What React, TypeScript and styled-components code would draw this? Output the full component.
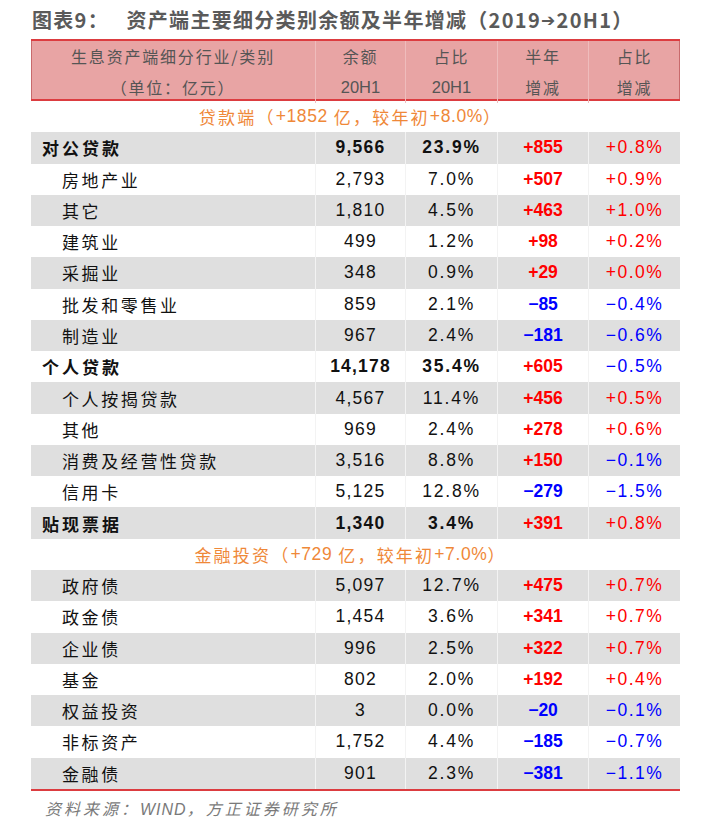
import React from "react";
import styled, { createGlobalStyle } from "styled-components";

const Global = createGlobalStyle`
  html, body { margin: 0; padding: 0; background: #ffffff; }
  body { font-family: "Noto Sans CJK SC", "Liberation Sans", sans-serif; }
`;

const COLS = "284px 90px 92px 91px 92px";
const ROW_H = 31.27;

const Page = styled.div`
  width: 709px;
  height: 832px;
  overflow: hidden;
  background: #fff;
`;

const Title = styled.h1`
  margin: 0;
  height: 39px;
  padding-left: 32px;
  display: flex;
  align-items: center;
  font-family: "Noto Sans CJK SC", sans-serif;
  font-size: 20px;
  font-weight: 700;
  color: #5a5a5a;
  letter-spacing: 1.3px;
  white-space: pre;
`;

const Arrow = styled.span`
  font-family: "DejaVu Sans", sans-serif;
  font-size: 17px;
`;

const Table = styled.div`
  margin-left: 31px;
  width: 649px;
  display: flex;
  flex-direction: column;
`;

const Header = styled.div`
  display: grid;
  grid-template-columns: ${COLS};
  background: #e8a4a4;
  border-top: 2px solid #dc3c40;
  border-bottom: 2px solid #dc3c40;
  box-shadow: inset 1px 0 0 #c86a6c, inset -1px 0 0 #c86a6c;
  height: 58px;
  box-sizing: content-box;
`;

const HeadCell = styled.div<{ $first?: boolean }>`
  display: flex;
  flex-direction: column;
  align-items: center;
  justify-content: center;
  border-left: ${(p) => (p.$first ? "none" : "1px solid #efbcbc")};
  color: #555;
  font-family: "Noto Sans CJK SC", sans-serif;
  font-size: 16px;
  letter-spacing: 1.8px;
  line-height: 31px;
`;

const HeadNum = styled.span`
  font-family: "Liberation Sans", sans-serif;
  font-size: 16.5px;
  letter-spacing: 0;
`;

const Section = styled.div`
  height: ${ROW_H}px;
  display: flex;
  align-items: center;
  justify-content: center;
  color: #ef8838;
  font-family: "Noto Sans CJK SC", sans-serif;
  font-size: 17px;
  letter-spacing: 2.2px;
  padding-right: 10px;
  white-space: pre;
`;

const SecNum = styled.span`
  font-family: "Liberation Sans", sans-serif;
  font-size: 17.5px;
  letter-spacing: 0.6px;
`;

const Row = styled.div<{ $shade: boolean }>`
  display: grid;
  grid-template-columns: ${COLS};
  height: ${ROW_H}px;
  background: ${(p) => (p.$shade ? "#dfdfdf" : "#ffffff")};
`;

const Label = styled.div<{ $bold: boolean; $indent: boolean }>`
  display: flex;
  align-items: center;
  padding-left: ${(p) => (p.$indent ? "31px" : "11px")};
  font-family: "Noto Sans CJK SC", sans-serif;
  font-size: 17px;
  font-weight: ${(p) => (p.$bold ? 700 : 400)};
  letter-spacing: ${(p) => (p.$bold ? "3px" : "2.6px")};
  color: #111;
`;

const Cell = styled.div<{
  $bold?: boolean;
  $color?: string;
  $spacing?: number;
}>`
  display: flex;
  align-items: center;
  justify-content: center;
  border-left: 1px solid #f3f3f3;
  font-family: "Liberation Sans", sans-serif;
  font-size: 17.5px;
  font-weight: ${(p) => (p.$bold ? 700 : 400)};
  color: ${(p) => p.$color || "#111"};
  letter-spacing: ${(p) => p.$spacing ?? 0.5}px;
`;

const BottomRule = styled.div`
  height: 2px;
  background: #dc3c40;
`;

const Source = styled.div`
  margin-top: 6px;
  padding-left: 45px;
  font-family: "Noto Sans CJK SC", sans-serif;
  font-style: italic;
  font-size: 16px;
  letter-spacing: 3px;
  color: #7a7a7a;
  line-height: 22px;
`;

const SourceLatin = styled.span`
  font-family: "Liberation Sans", sans-serif;
  letter-spacing: 1px;
`;

const Note = styled.div`
  margin-top: 7px;
  padding-left: 50px;
  font-family: "Noto Sans CJK SC", sans-serif;
  font-size: 16px;
  letter-spacing: 3px;
  color: #2f6fc0;
  line-height: 22px;
`;

type R = {
  label: string;
  amt: string;
  share: string;
  chg: string;
  pct: string;
  bold?: boolean;
};

const RED = "#ff0000";
const BLUE = "#0000ff";
const M = "\u2212";

const loans: R[] = [
  { label: "对公贷款", amt: "9,566", share: "23.9%", chg: "+855", pct: "+0.8%", bold: true },
  { label: "房地产业", amt: "2,793", share: "7.0%", chg: "+507", pct: "+0.9%" },
  { label: "其它", amt: "1,810", share: "4.5%", chg: "+463", pct: "+1.0%" },
  { label: "建筑业", amt: "499", share: "1.2%", chg: "+98", pct: "+0.2%" },
  { label: "采掘业", amt: "348", share: "0.9%", chg: "+29", pct: "+0.0%" },
  { label: "批发和零售业", amt: "859", share: "2.1%", chg: M + "85", pct: M + "0.4%" },
  { label: "制造业", amt: "967", share: "2.4%", chg: M + "181", pct: M + "0.6%" },
  { label: "个人贷款", amt: "14,178", share: "35.4%", chg: "+605", pct: M + "0.5%", bold: true },
  { label: "个人按揭贷款", amt: "4,567", share: "11.4%", chg: "+456", pct: "+0.5%" },
  { label: "其他", amt: "969", share: "2.4%", chg: "+278", pct: "+0.6%" },
  { label: "消费及经营性贷款", amt: "3,516", share: "8.8%", chg: "+150", pct: M + "0.1%" },
  { label: "信用卡", amt: "5,125", share: "12.8%", chg: M + "279", pct: M + "1.5%" },
  { label: "贴现票据", amt: "1,340", share: "3.4%", chg: "+391", pct: "+0.8%", bold: true },
];

const invest: R[] = [
  { label: "政府债", amt: "5,097", share: "12.7%", chg: "+475", pct: "+0.7%" },
  { label: "政金债", amt: "1,454", share: "3.6%", chg: "+341", pct: "+0.7%" },
  { label: "企业债", amt: "996", share: "2.5%", chg: "+322", pct: "+0.7%" },
  { label: "基金", amt: "802", share: "2.0%", chg: "+192", pct: "+0.4%" },
  { label: "权益投资", amt: "3", share: "0.0%", chg: M + "20", pct: M + "0.1%" },
  { label: "非标资产", amt: "1,752", share: "4.4%", chg: M + "185", pct: M + "0.7%" },
  { label: "金融债", amt: "901", share: "2.3%", chg: M + "381", pct: M + "1.1%" },
];

const colorOf = (s: string) => (s.startsWith("+") ? RED : BLUE);

const DataRow = ({ r, shade }: { r: R; shade: boolean }) => (
  <Row $shade={shade}>
    <Label $bold={!!r.bold} $indent={!r.bold}>
      {r.label}
    </Label>
    <Cell $bold={r.bold} $spacing={1.2}>{r.amt}</Cell>
    <Cell $bold={r.bold} $spacing={1.8}>{r.share}</Cell>
    <Cell $bold $color={colorOf(r.chg)} $spacing={0}>
      {r.chg}
    </Cell>
    <Cell $color={colorOf(r.pct)} $spacing={1.5}>
      {r.pct}
    </Cell>
  </Row>
);

export default function App() {
  return (
    <Page>
      <Global />
      <Title>
        {"图表9：   资产端主要细分类别余额及半年增减（2019"}
        <Arrow>➔</Arrow>
        {"20H1）"}
      </Title>
      <Table>
        <Header>
          <HeadCell $first>
            <span>生息资产端细分行业/类别</span>
            <span>（单位：亿元）</span>
          </HeadCell>
          <HeadCell>
            <span>余额</span>
            <HeadNum>20H1</HeadNum>
          </HeadCell>
          <HeadCell>
            <span>占比</span>
            <HeadNum>20H1</HeadNum>
          </HeadCell>
          <HeadCell>
            <span>半年</span>
            <span>增减</span>
          </HeadCell>
          <HeadCell>
            <span>占比</span>
            <span>增减</span>
          </HeadCell>
        </Header>
        <Section>
          {"贷款端（"}<SecNum>+1852</SecNum>{" 亿，较年初"}<SecNum>+8.0%</SecNum>{"）"}
        </Section>
        {loans.map((r, i) => (
          <DataRow key={r.label + i} r={r} shade={i % 2 === 0} />
        ))}
        <Section>
          {"金融投资（"}<SecNum>+729</SecNum>{" 亿，较年初"}<SecNum>+7.0%</SecNum>{"）"}
        </Section>
        {invest.map((r, i) => (
          <DataRow key={r.label + i} r={r} shade={i % 2 === 0} />
        ))}
        <BottomRule />
      </Table>
      <Source>
        资料来源：<SourceLatin>WIND</SourceLatin>，方正证券研究所
      </Source>
      <Note>注：对公贷款中其它包括交通运输、仓储和邮政业等行业</Note>
    </Page>
  );
}
